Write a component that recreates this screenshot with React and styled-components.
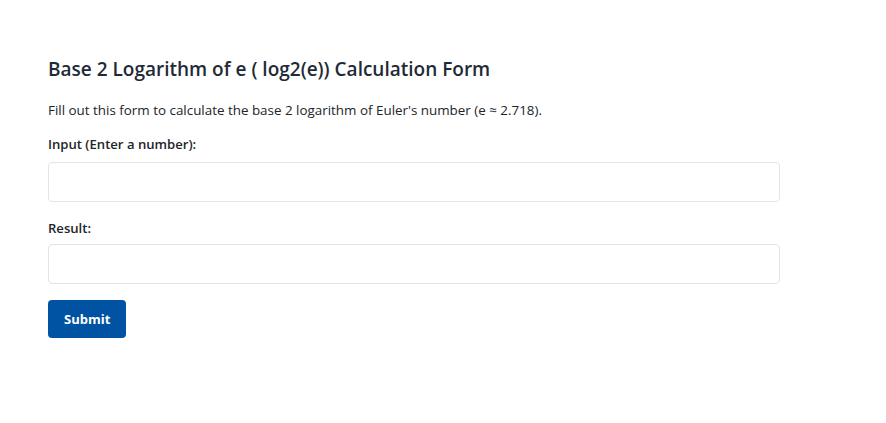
import React from "react";
import styled, { createGlobalStyle } from "styled-components";

const GlobalStyle = createGlobalStyle`
  body {
    margin: 0;
    background: #ffffff;
    font-family: "Open Sans", "Noto Sans", sans-serif;
    color: #212529;
  }
`;

const Page = styled.div`
  padding: 48px 106px 40px 48px;
`;

const Title = styled.h2`
  margin: 0 0 11px;
  font-size: 19px;
  font-weight: 600;
  line-height: 42px;
  color: #1f2a37;
`;

const Intro = styled.p`
  margin: 0 0 16px;
  font-size: 13.4px;
  line-height: 18px;
  color: #212529;
`;

const Form = styled.form`
  display: flex;
  flex-direction: column;
  align-items: flex-start;
`;

const Label = styled.label`
  display: block;
  font-size: 13.1px;
  font-weight: 600;
  line-height: 18px;
  margin-bottom: ${({ $gap }) => $gap}px;
`;

const Field = styled.input`
  box-sizing: border-box;
  width: 100%;
  height: 40px;
  margin-bottom: ${({ $gap }) => $gap}px;
  padding: 6px 12px;
  border: 1px solid #e2e4e8;
  border-radius: 4px;
  font-family: inherit;
  font-size: 14px;
  background: #fff;
`;

const SubmitButton = styled.button`
  height: 38px;
  padding: 0 16px;
  border: none;
  border-radius: 4px;
  background: #0052a3;
  color: #ffffff;
  font-family: inherit;
  font-size: 13px;
  font-weight: 700;
  cursor: pointer;
`;

export default function App() {
  return (
    <>
      <GlobalStyle />
      <Page>
        <Title>Base 2 Logarithm of e ( log2(e)) Calculation Form</Title>
        <Intro>
          Fill out this form to calculate the base 2 logarithm of Euler's number (e ≈ 2.718).
        </Intro>
        <Form onSubmit={(e) => e.preventDefault()}>
          <Label htmlFor="input" $gap={9}>Input (Enter a number):</Label>
          <Field id="input" type="text" $gap={17} />
          <Label htmlFor="result" $gap={7}>Result:</Label>
          <Field id="result" type="text" readOnly $gap={16} />
          <SubmitButton type="submit">Submit</SubmitButton>
        </Form>
      </Page>
    </>
  );
}
